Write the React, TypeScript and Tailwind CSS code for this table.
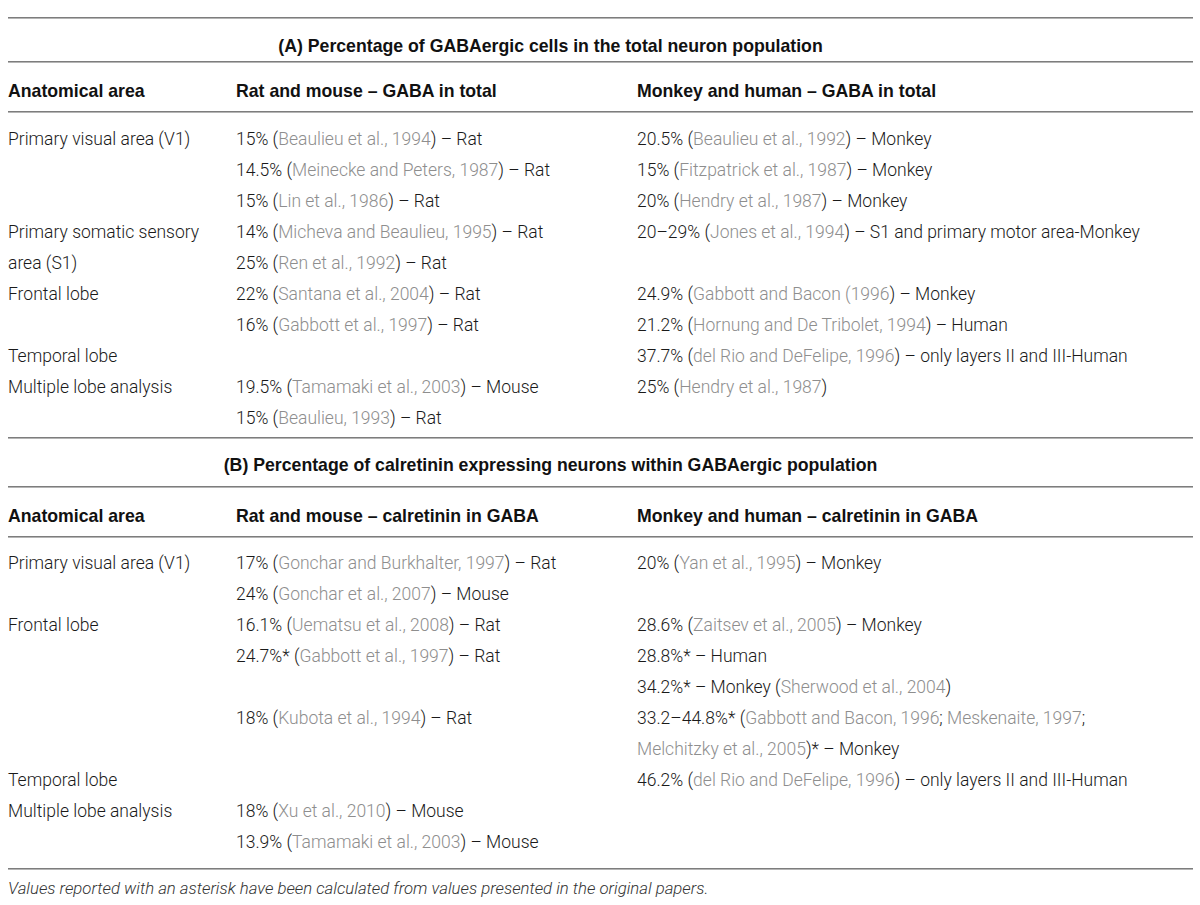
import React from "react";

type Row = [string, string, string];

const rowsA: Row[] = [
  ["Primary visual area (V1)", "15% ({Beaulieu et al., 1994}) – Rat", "20.5% ({Beaulieu et al., 1992}) – Monkey"],
  ["", "14.5% ({Meinecke and Peters, 1987}) – Rat", "15% ({Fitzpatrick et al., 1987}) – Monkey"],
  ["", "15% ({Lin et al., 1986}) – Rat", "20% ({Hendry et al., 1987}) – Monkey"],
  ["Primary somatic sensory", "14% ({Micheva and Beaulieu, 1995}) – Rat", "20–29% ({Jones et al., 1994}) – S1 and primary motor area-Monkey"],
  ["area (S1)", "25% ({Ren et al., 1992}) – Rat", ""],
  ["Frontal lobe", "22% ({Santana et al., 2004}) – Rat", "24.9% ({Gabbott and Bacon (1996}) – Monkey"],
  ["", "16% ({Gabbott et al., 1997}) – Rat", "21.2% ({Hornung and De Tribolet, 1994}) – Human"],
  ["Temporal lobe", "", "37.7% ({del Rio and DeFelipe, 1996}) – only layers II and III-Human"],
  ["Multiple lobe analysis", "19.5% ({Tamamaki et al., 2003}) – Mouse", "25% ({Hendry et al., 1987})"],
  ["", "15% ({Beaulieu, 1993}) – Rat", ""],
];

const rowsB: Row[] = [
  ["Primary visual area (V1)", "17% ({Gonchar and Burkhalter, 1997}) – Rat", "20% ({Yan et al., 1995}) – Monkey"],
  ["", "24% ({Gonchar et al., 2007}) – Mouse", ""],
  ["Frontal lobe", "16.1% ({Uematsu et al., 2008}) – Rat", "28.6% ({Zaitsev et al., 2005}) – Monkey"],
  ["", "24.7%* ({Gabbott et al., 1997}) – Rat", "28.8%* – Human"],
  ["", "", "34.2%* – Monkey ({Sherwood et al., 2004})"],
  ["", "18% ({Kubota et al., 1994}) – Rat", "33.2–44.8%* ({Gabbott and Bacon, 1996}; {Meskenaite, 1997};"],
  ["", "", "{Melchitzky et al., 2005})* – Monkey"],
  ["Temporal lobe", "", "46.2% ({del Rio and DeFelipe, 1996}) – only layers II and III-Human"],
  ["Multiple lobe analysis", "18% ({Xu et al., 2010}) – Mouse", ""],
  ["", "13.9% ({Tamamaki et al., 2003}) – Mouse", ""],
];

function Cell({ text }: { text: string }) {
  const parts = text.split(/(\{[^}]*\})/).filter((p) => p.length > 0);
  return (
    <div className="whitespace-nowrap">
      {parts.map((p, i) =>
        p.startsWith("{") ? (
          <span key={i} className="text-[#8e8e8e]">
            {p.slice(1, -1)}
          </span>
        ) : (
          <span key={i}>{p}</span>
        )
      )}
    </div>
  );
}

function Line() {
  return <div className="h-[2px] bg-[#7d7d7d] border-b border-[#b5b5b5]" />;
}

const boldFont = { fontFamily: "'Liberation Sans', Arial, sans-serif" };

function Section({
  title,
  h2,
  h3,
  rows,
  titlePt,
  titlePb,
  bodyPt,
  bodyPb,
}: {
  title: string;
  h2: string;
  h3: string;
  rows: Row[];
  titlePt: string;
  titlePb: string;
  bodyPt: string;
  bodyPb: string;
}) {
  return (
    <>
      <div
        className={`${titlePt} ${titlePb} pr-[100px] text-center font-bold text-[17.7px] leading-[20px] text-[#111]`}
        style={boldFont}
      >
        {title}
      </div>
      <Line />
      <div
        className="grid grid-cols-[228px_401px_1fr] pt-[18px] pb-[10px] font-bold text-[17.7px] leading-[20px] text-[#111]"
        style={boldFont}
      >
        <div>Anatomical area</div>
        <div>{h2}</div>
        <div>{h3}</div>
      </div>
      <Line />
      <div className={`${bodyPt} ${bodyPb}`}>
        {rows.map((r, i) => (
          <div key={i} className="grid grid-cols-[228px_401px_1fr] h-[31px] leading-[31px]">
            <Cell text={r[0]} />
            <Cell text={r[1]} />
            <Cell text={r[2]} />
          </div>
        ))}
      </div>
      <Line />
    </>
  );
}

export default function App() {
  return (
    <div
      className="w-[1200px] h-[905px] bg-white text-[#1a1a1a] text-[17.5px] font-light"
      style={{ fontFamily: "Roboto, 'Liberation Sans', Arial, sans-serif" }}
    >
      <div className="ml-[8px] w-[1185px] pt-[17px]">
        <Line />
        <Section
          title="(A) Percentage of GABAergic cells in the total neuron population"
          h2="Rat and mouse – GABA in total"
          h3="Monkey and human – GABA in total"
          rows={rowsA}
          titlePt="pt-[17px]"
          titlePb="pb-[5px]"
          bodyPt="pt-[11px]"
          bodyPb="pb-[3px]"
        />
        <Section
          title="(B) Percentage of calretinin expressing neurons within GABAergic population"
          h2="Rat and mouse – calretinin in GABA"
          h3="Monkey and human – calretinin in GABA"
          rows={rowsB}
          titlePt="pt-[16px]"
          titlePb="pb-[11px]"
          bodyPt="pt-[10px]"
          bodyPb="pb-[10px]"
        />
        <div className="pt-[8px] italic text-[16.75px] leading-[20px] text-[#333]">
          Values reported with an asterisk have been calculated from values presented in the original papers.
        </div>
      </div>
    </div>
  );
}
